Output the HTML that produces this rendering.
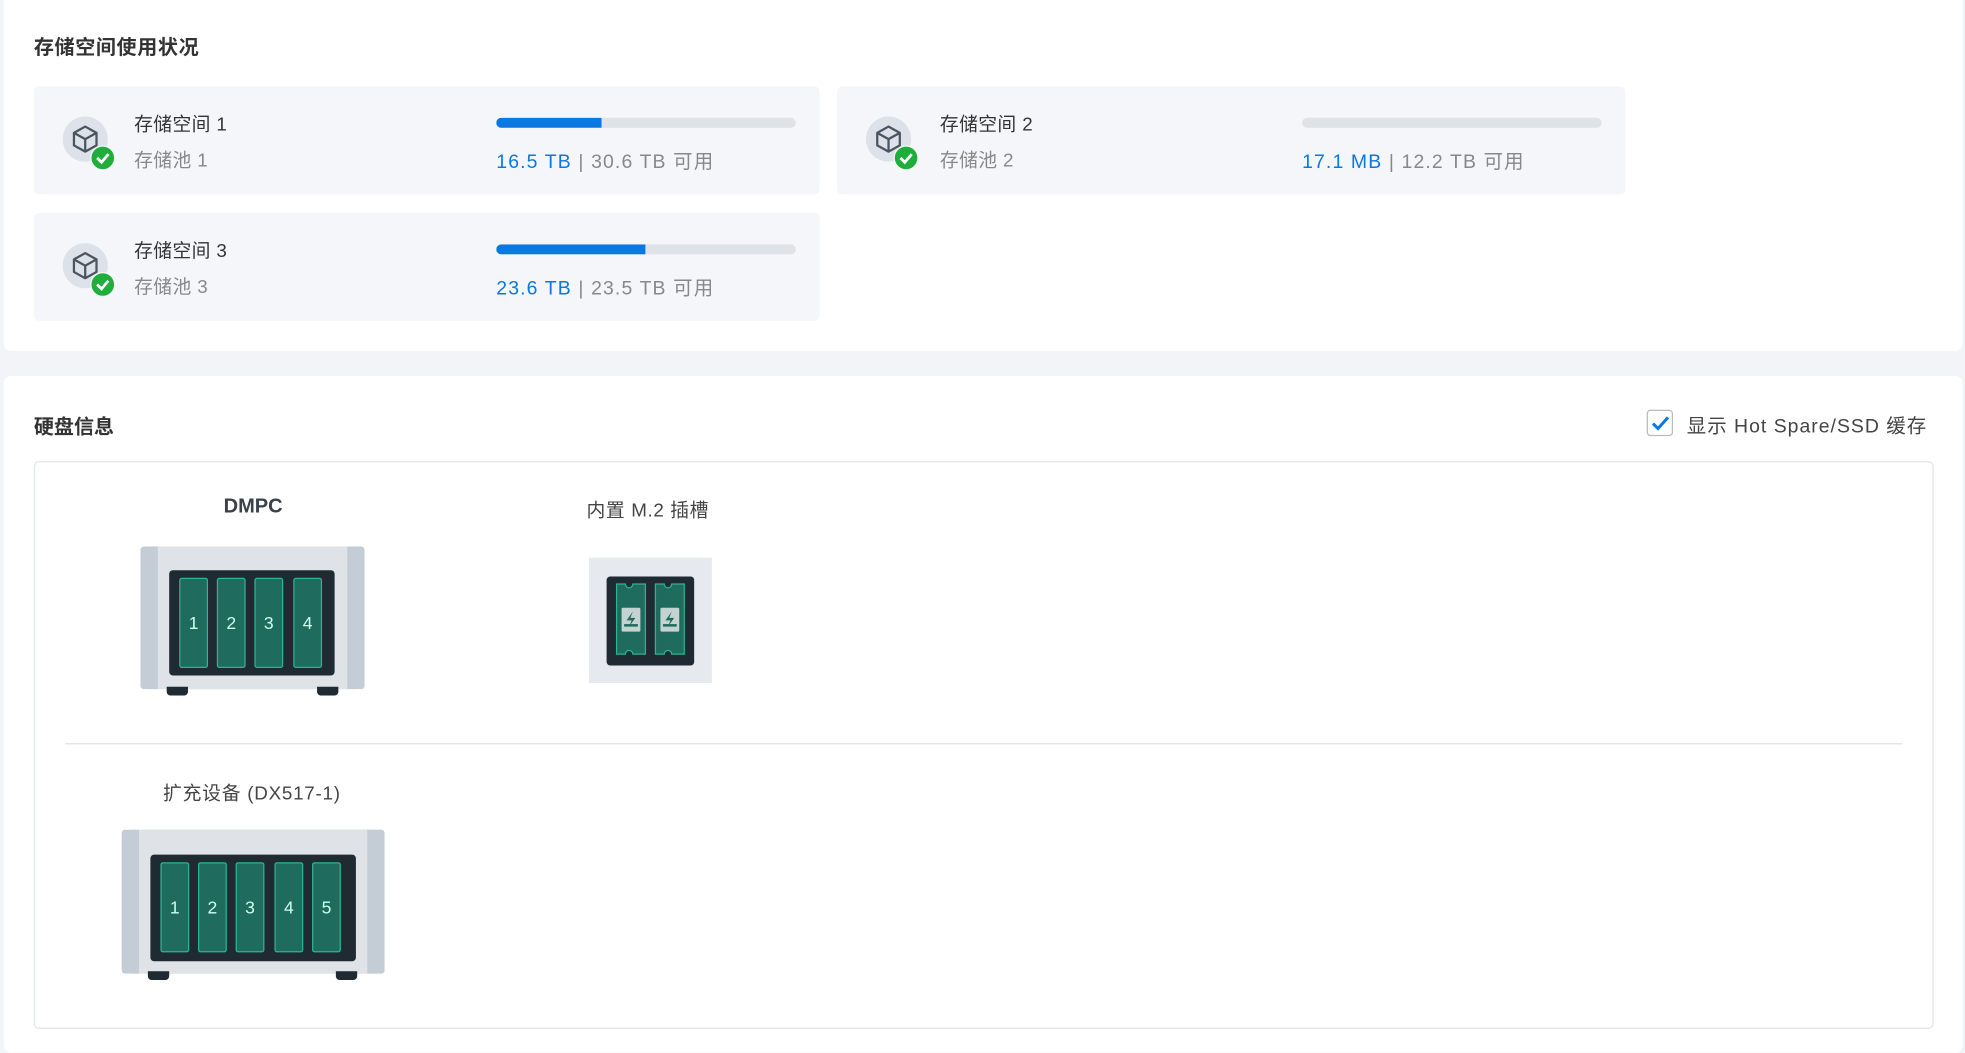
<!DOCTYPE html>
<html><head><meta charset="utf-8"><style>
body{margin:0;width:1965px;height:1034px;overflow:hidden;background:#f2f4f7;font-family:"Liberation Sans","Noto Sans CJK SC",sans-serif;}
#w{position:absolute;left:0;top:0;width:1568px;height:825px;transform:scale(1.2532);transform-origin:0 0;}
.a{position:absolute}
.card{background:#fff;border-radius:6px}
.tile{background:#f4f6f9;border-radius:4px;width:627px;height:86px}
.t1{font-size:15px;color:#333;left:80px;top:19px;letter-spacing:.3px}
.t2{font-size:15px;color:#888;left:80px;top:48px;letter-spacing:.3px}
.bar{left:369px;top:25px;width:239px;height:8px;border-radius:4px;background:#dfe3e8;overflow:hidden}
.bar i{display:block;height:100%;background:#0a78e2}
.u{left:369px;top:48px;font-size:15.5px;color:#888;letter-spacing:.9px}
.u b{color:#0a78e2;font-weight:normal}
.h{font-size:16px;font-weight:bold;color:#333}
.drv{position:absolute;top:6px;width:21px;height:70px;background:#1f6b5d;border:1px solid #2bb594;border-radius:2px;color:#cfe;font-size:14px;text-align:center;line-height:70px}
</style></head><body><div id="w">
<div class="a card" style="left:3px;top:-10px;width:1563px;height:290px"></div>
<div class="a h" style="left:27px;top:24px;letter-spacing:.5px">存储空间使用状况</div>

<div class="a tile" style="left:27px;top:69px">
<svg class="a" style="left:22px;top:22px" width="46" height="46"><circle cx="19" cy="20" r="18" fill="#dde2ea"/><path d="M10 15 L19 10 L28 15 L28 25 L19 30 L10 25Z M10 15 L19 20 L28 15 M19 20 L19 30" fill="none" stroke="#4a5560" stroke-width="1.8" stroke-linejoin="round"/><circle cx="33" cy="35" r="9.5" fill="#1fae3c" stroke="#f4f6f9" stroke-width="1"/><path d="M28.5 35 L32 38.5 L37.5 32" fill="none" stroke="#fff" stroke-width="2.2"/></svg>
<div class="a t1">存储空间 1</div><div class="a t2">存储池 1</div>
<div class="a bar"><i style="width:84px"></i></div>
<div class="a u"><b>16.5 TB</b> | 30.6 TB 可用</div></div>

<div class="a tile" style="left:668px;top:69px;width:629px">
<svg class="a" style="left:22px;top:22px" width="46" height="46"><circle cx="19" cy="20" r="18" fill="#dde2ea"/><path d="M10 15 L19 10 L28 15 L28 25 L19 30 L10 25Z M10 15 L19 20 L28 15 M19 20 L19 30" fill="none" stroke="#4a5560" stroke-width="1.8" stroke-linejoin="round"/><circle cx="33" cy="35" r="9.5" fill="#1fae3c" stroke="#f4f6f9" stroke-width="1"/><path d="M28.5 35 L32 38.5 L37.5 32" fill="none" stroke="#fff" stroke-width="2.2"/></svg>
<div class="a t1" style="left:82px">存储空间 2</div><div class="a t2" style="left:82px">存储池 2</div>
<div class="a bar" style="left:371px"><i style="width:0"></i></div>
<div class="a u" style="left:371px"><b>17.1 MB</b> | 12.2 TB 可用</div></div>

<div class="a tile" style="left:27px;top:170px">
<svg class="a" style="left:22px;top:22px" width="46" height="46"><circle cx="19" cy="20" r="18" fill="#dde2ea"/><path d="M10 15 L19 10 L28 15 L28 25 L19 30 L10 25Z M10 15 L19 20 L28 15 M19 20 L19 30" fill="none" stroke="#4a5560" stroke-width="1.8" stroke-linejoin="round"/><circle cx="33" cy="35" r="9.5" fill="#1fae3c" stroke="#f4f6f9" stroke-width="1"/><path d="M28.5 35 L32 38.5 L37.5 32" fill="none" stroke="#fff" stroke-width="2.2"/></svg>
<div class="a t1">存储空间 3</div><div class="a t2">存储池 3</div>
<div class="a bar"><i style="width:119px"></i></div>
<div class="a u"><b>23.6 TB</b> | 23.5 TB 可用</div></div>

<div class="a card" style="left:3px;top:300px;width:1563px;height:540px"></div>
<div class="a h" style="left:27px;top:327px">硬盘信息</div>
<div class="a" style="left:1314px;top:327px;width:19px;height:19px;border:1px solid #bbb;border-radius:3px;background:#fff"><svg width="19" height="19"><path d="M4 10 L8 14 L16 5" fill="none" stroke="#0a78e2" stroke-width="2.4"/></svg></div>
<div class="a" style="left:1346px;top:328px;font-size:15.5px;color:#444;letter-spacing:.8px">显示 Hot Spare/SSD 缓存</div>
<div class="a" style="left:27px;top:368px;width:1514px;height:451px;border:1px solid #e2e5e9;border-radius:4px;background:#fff"></div>

<div class="a h" style="left:152px;top:396px;width:100px;text-align:center;color:#3a4149">DMPC</div>
<div class="a" style="left:112px;top:436px;width:179px;height:114px;background:#dfe3e8;border-radius:3px;border-left:14px solid #c4ccd5;border-right:14px solid #c4ccd5;box-sizing:border-box"></div>
<div class="a" style="left:133px;top:548px;width:17px;height:7px;background:#1f2a33;border-radius:0 0 3px 3px"></div>
<div class="a" style="left:253px;top:548px;width:17px;height:7px;background:#1f2a33;border-radius:0 0 3px 3px"></div>
<div class="a" style="left:135px;top:455px;width:132px;height:84px;background:#1f2a33;border-radius:3px">
<div class="drv" style="left:8px">1</div><div class="drv" style="left:38px">2</div><div class="drv" style="left:68px">3</div><div class="drv" style="left:99px">4</div></div>

<div class="a" style="left:468px;top:396px;font-size:15px;color:#444;letter-spacing:.5px">内置 M.2 插槽</div>
<div class="a" style="left:470px;top:445px;width:98px;height:100px;background:#e6e9ed"></div>
<svg class="a" style="left:484px;top:460px" width="70" height="71"><rect width="70" height="71" rx="3" fill="#1f2a33"/>
<g id="s"><path d="M8 6 H15 A3 3 0 0 0 21 6 H31 V62 H21 A3 3 0 0 0 15 62 H8Z" fill="#1f6b5d" stroke="#2bb594" stroke-width="1"/><rect x="12" y="25" width="15" height="19" rx="1" fill="#c5d3d0"/><path d="M21 28 L16 35 H20 L18 40 L23 33 H19Z" fill="#1f6b5d"/><rect x="14" y="38" width="11" height="2" fill="#1f6b5d"/></g>
<use href="#s" x="31"/></svg>

<div class="a" style="left:52px;top:593px;width:1466px;height:1px;background:#dfe2e6"></div>

<div class="a" style="left:91px;top:622px;width:220px;text-align:center;font-size:15px;color:#444;letter-spacing:.6px">扩充设备 (DX517-1)</div>
<div class="a" style="left:97px;top:662px;width:210px;height:115px;background:#dfe3e8;border-radius:3px;border-left:14px solid #c4ccd5;border-right:14px solid #c4ccd5;box-sizing:border-box"></div>
<div class="a" style="left:118px;top:775px;width:17px;height:7px;background:#1f2a33;border-radius:0 0 3px 3px"></div>
<div class="a" style="left:268px;top:775px;width:17px;height:7px;background:#1f2a33;border-radius:0 0 3px 3px"></div>
<div class="a" style="left:120px;top:682px;width:164px;height:85px;background:#1f2a33;border-radius:3px">
<div class="drv" style="left:8px">1</div><div class="drv" style="left:38px">2</div><div class="drv" style="left:68px">3</div><div class="drv" style="left:99px">4</div><div class="drv" style="left:129px">5</div></div>
</div></body></html>
